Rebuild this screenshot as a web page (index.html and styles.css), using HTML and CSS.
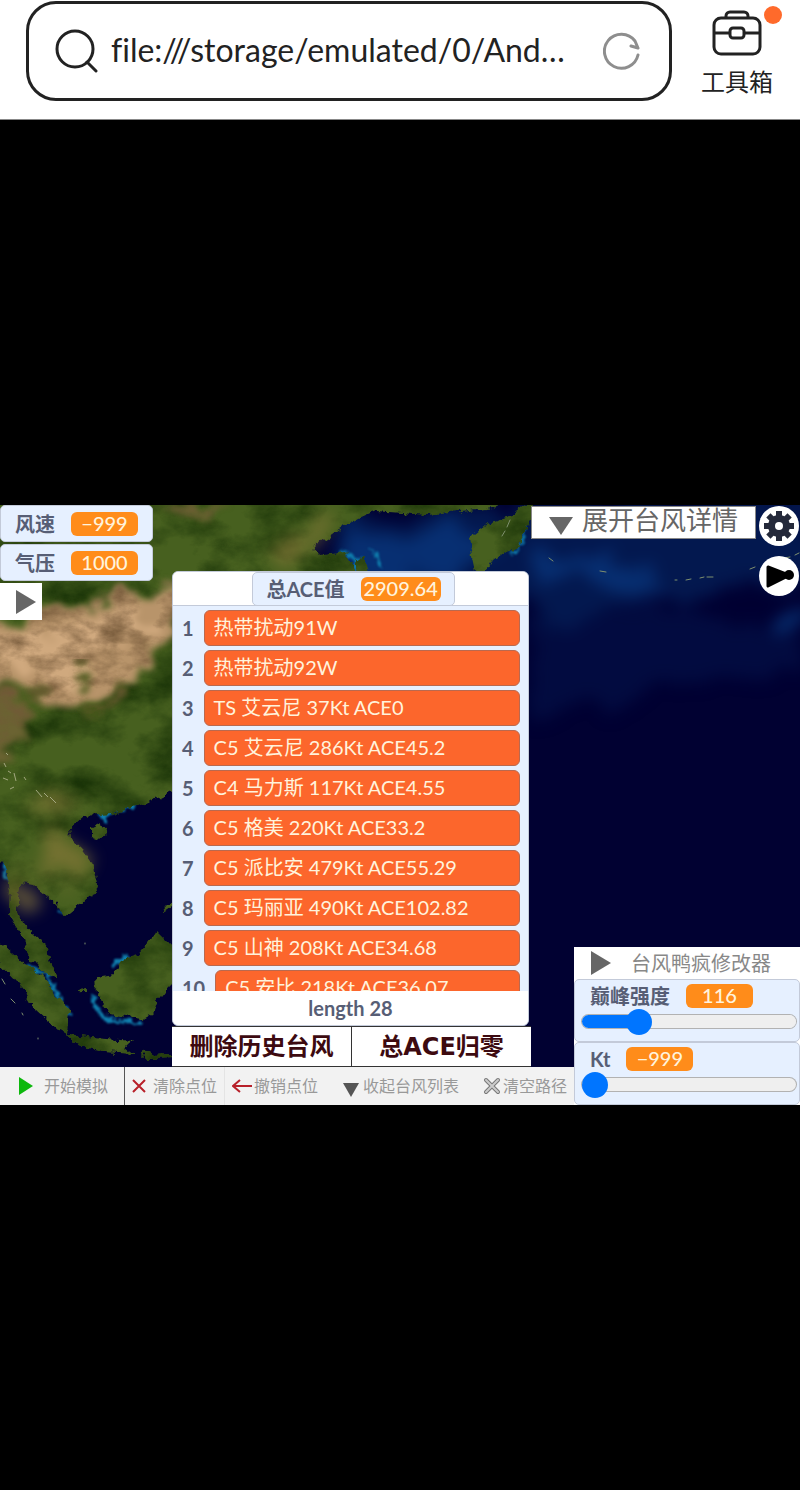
FILE: index.html
```html
<!DOCTYPE html>
<html lang="zh-CN">
<head>
  <meta charset="UTF-8">
  <meta name="viewport" content="width=device-width, initial-scale=1">
  <title>台风模拟器</title>
  <link rel="stylesheet" href="styles.css">
</head>
<body>
  <header class="browser-bar">
    <form class="address">
      <svg class="search-icon" viewBox="0 0 44 44" aria-hidden="true">
        <circle cx="20" cy="20" r="18"/>
        <path d="M32 33l9 9"/>
      </svg>
      <input class="address-input" type="text" aria-label="地址" value="file:///storage/emulated/0/And…">
      <button class="reload" type="button" aria-label="刷新">
        <svg viewBox="0 0 38 38" aria-hidden="true">
          <path d="M35 23A17 17 0 1 1 32 9l3 7-7-2"/>
        </svg>
      </button>
    </form>
    <button class="toolbox">
      <svg class="toolbox-icon" viewBox="0 0 50 46" aria-hidden="true">
        <rect x="2" y="8" width="46" height="36" rx="7"/>
        <path d="M14 8V6a4 4 0 0 1 4-4h14a4 4 0 0 1 4 4v2M2 23h16M32 23h16"/>
        <rect x="18" y="18" width="14" height="10" rx="3"/>
      </svg>
      <span>工具箱</span>
      <i class="badge"></i>
    </button>
  </header>

  <main class="stage">
    <div class="game">
      <svg class="map" viewBox="0 0 800 600" preserveAspectRatio="none" aria-hidden="true">
        <defs>
          <filter id="coast" x="-5%" y="-5%" width="110%" height="110%" color-interpolation-filters="sRGB">
            <feTurbulence type="fractalNoise" baseFrequency="0.12" numOctaves="3" seed="4" result="n"/>
            <feDisplacementMap in="SourceGraphic" in2="n" scale="9" xChannelSelector="R" yChannelSelector="G" result="land"/>
            <feTurbulence type="fractalNoise" baseFrequency="0.02 0.03" numOctaves="6" seed="9"/>
            <feColorMatrix values="0 0 0 0 0.10  0 0 0 0 0.20  0 0 0 0 0.03  2 0 0 0 -0.75"/>
            <feComposite in2="land" operator="in" result="dark"/>
            <feMerge>
              <feMergeNode in="land"/>
              <feMergeNode in="dark"/>
            </feMerge>
            <feGaussianBlur stdDeviation="0.6"/>
          </filter>
          <filter id="water" color-interpolation-filters="sRGB">
            <feTurbulence type="fractalNoise" baseFrequency="0.15" numOctaves="3" seed="5" result="n"/>
            <feDisplacementMap in="SourceGraphic" in2="n" scale="12" xChannelSelector="R" yChannelSelector="G"/>
            <feGaussianBlur stdDeviation="1"/>
          </filter>
          <filter id="haze" x="-20%" y="-20%" width="140%" height="140%" color-interpolation-filters="sRGB">
            <feTurbulence type="fractalNoise" baseFrequency="0.03" numOctaves="4" seed="2" result="n"/>
            <feDisplacementMap in="SourceGraphic" in2="n" scale="50" xChannelSelector="R" yChannelSelector="G"/>
            <feGaussianBlur stdDeviation="8"/>
          </filter>
          <filter id="sand" x="-10%" y="-10%" width="120%" height="120%" color-interpolation-filters="sRGB">
            <feTurbulence type="fractalNoise" baseFrequency="0.03 0.05" numOctaves="5" seed="7" result="n"/>
            <feDisplacementMap in="SourceGraphic" in2="n" scale="50" xChannelSelector="R" yChannelSelector="G" result="d"/>
            <feGaussianBlur in="d" stdDeviation="3" result="b"/>
            <feColorMatrix in="n" values="0 0 0 0 0.45  0 0 0 0 0.34  0 0 0 0 0.22  0 2 0 0 -0.8"/>
            <feComposite in2="b" operator="in" result="shade"/>
            <feMerge>
              <feMergeNode in="b"/>
              <feMergeNode in="shade"/>
            </feMerge>
          </filter>
          <clipPath id="mainland-clip">
            <path d="M0 0H350L172 150V270H0Z"/>
          </clipPath>
        </defs>
        <rect width="800" height="600" fill="#010132"/>
        <g filter="url(#haze)">
          <path fill="#03184f" d="M340 10L540 0 820-10V70L720 90 640 100 560 120 520 80H340Z"/>
          <path fill="#072f72" d="M350 20l60 15 40-15 60 20-60 25-90 20zM530 40l60 10 60 20 10 25-60-20-60 0zM770 115l30-10v20l-30 5z"/>
          <path fill="#020b40" d="M530 120l140-20 130 30v40l-160 20-110 20z"/>
        </g>
        <!-- shallow water along the coasts -->
        <g class="shallows" filter="url(#water)">
          <path d="M306 42l-8 6M340 45l18 10-4 12M374 45l6 18"/>
          <path d="M100 310l35-10M104 310v8M2 348l6 30M20 376l8-4M58 408l10-3"/>
          <path d="M27 462l20 8 10 20 12 22M94 490l2 14 10 10 34 4M112 462l16-10M164 445v32"/>
          <path d="M162 171h10" stroke-width="9"/>
          <path d="M522 15v20l-10 15"/>
        </g>
        <g class="land" filter="url(#coast)">
          <path d="M-9-9H466L456 6 428 10 376 6 358 14 340 24 326 34 310 44 324 50 346 47 356 66V90L200 200 176 284 154 295 132 303 112 309 84 311 70 323 71 334 82 344 92 358 97 378 92 391 78 401 64 412 58 400 46 390 32 378 22 376 17 402 23 418 34 430 46 440 50 458 57 473 44 468 28 450 24 434 14 420 9 410 10 385 6 364-9 346Z"/>
          <path d="M532-5L508 13 484 20 469 32 471 47 476 70H485L492 56 503 48 517 44 524 28 534 10Z"/>
          <path d="M356 56l8-5 4 19h-10zM500-5h-54l14 12 34-4z"/>
          <path d="M91 323l8-4 8 2-1 8-7 6-8-3z"/>
          <path d="M-9 434L4 440 26 460 44 470 54 488 70 506 68 528 56 524 36 506 22 482-9 450Z"/>
          <path d="M157 426l10 10 9 5v34l-12 12-8 10-4 12-10 6-32-6-8-14-6-8-1-16 18-3 10-14 16-4 8-10z"/>
          <path d="M68 529l24 4 40 3-6 5 10 8-34-2-31-10zM140 548l8-2 6 4 14-1 8 1v3l-30 1zM80 485l6-1v4h-5zM173 394l-12 14 2-1 12-8z"/>
        </g>
        <g clip-path="url(#mainland-clip)">
          <g filter="url(#sand)">
            <path fill="#b8946a" d="M-20 112L30 116 80 104 130 88 178 76V118L150 145 138 170 112 188 92 192 66 208 48 202 24 178-20 178Z"/>
            <path fill="#d0a97e" d="M-10 132L60 120 140 100 154 120 90 150 84 176 58 184 38 160-10 148Z"/>
            <path fill="#6b6332" d="M-20 185L18 192 26 220 10 250-20 260ZM160 5L230 4 220 12 170 18Z"/>
          </g>
          <g filter="url(#sand)" fill="#46551a">
            <path d="M70 168l14-8 8 4-12 20zM88 200l20-4 6-14 10-2-10 26-20 8zM22 182l26 12-8 8z"/>
          </g>
        </g>
        <g filter="url(#haze)" fill="#8a7a3a" opacity=".7">
          <path d="M34 340l32-6 14 26-38 10zM54 376l18 4-8 14zM20 300l40-10 30 10-50 12zM20 350l20 60-20 0zM270 50l60-40 10 8-52 36z"/>
        </g>
        <g class="snow">
          <path d="M4 258l2 4M8 266l3 2M3 273l5 2M14 268l2 8M36 285l6 7M44 288l4 4M50 292l6 6M10 284l4-2M24 272l2 3M6 248l2 2"/>
        </g>
        <g class="islets">
          <path d="M549 53l4 3M600 66l6 1M675 75l2 0M686 75l5-1M700 73l4-1M707 72l6 0M750 64l5-2M765 60l3-3M784 53l6-1M795 50l4-2M510 15l-3 7M505 26l-3 5M2 474l3 5M11 494l4 4M22 508l1 2M85 438v1M38 533v1"/>
        </g>
      </svg>

      <section class="readouts">
        <div class="monitor"><span>风速</span><output class="value">−999</output></div>
        <div class="monitor"><span>气压</span><output class="value">1000</output></div>
        <button class="toggle" aria-label="展开">
          <svg class="arrow" viewBox="0 0 20 24" aria-hidden="true"><path d="M0 0l20 12L0 24z"/></svg>
        </button>
      </section>

      <section class="history">
        <div class="list">
          <div class="list-head">
            <div class="monitor total"><span>总ACE值</span><output class="value">2909.64</output></div>
          </div>
          <ol class="rows">
            <li><span class="num">1</span><span class="item">热带扰动91W</span></li>
            <li><span class="num">2</span><span class="item">热带扰动92W</span></li>
            <li><span class="num">3</span><span class="item">TS 艾云尼 37Kt ACE0</span></li>
            <li><span class="num">4</span><span class="item">C5 艾云尼 286Kt ACE45.2</span></li>
            <li><span class="num">5</span><span class="item">C4 马力斯 117Kt ACE4.55</span></li>
            <li><span class="num">6</span><span class="item">C5 格美 220Kt ACE33.2</span></li>
            <li><span class="num">7</span><span class="item">C5 派比安 479Kt ACE55.29</span></li>
            <li><span class="num">8</span><span class="item">C5 玛丽亚 490Kt ACE102.82</span></li>
            <li><span class="num">9</span><span class="item">C5 山神 208Kt ACE34.68</span></li>
            <li><span class="num">10</span><span class="item">C5 安比 218Kt ACE36.07</span></li>
          </ol>
          <div class="list-foot">length 28</div>
        </div>
        <div class="actions">
          <button>删除历史台风</button>
          <button>总ACE归零</button>
        </div>
      </section>

      <section class="corner">
        <button class="details">
          <svg class="arrow-down" viewBox="0 0 24 18" aria-hidden="true"><path d="M0 0h24L12 18z"/></svg>
          <span>展开台风详情</span>
        </button>
        <div class="round-buttons">
          <button class="round" aria-label="设置">
            <svg viewBox="0 0 40 40" aria-hidden="true">
              <g fill="#24293a">
                <circle cx="20" cy="20" r="11"/>
                <path d="M17 5h6v30h-6z"/>
                <path d="M17 5h6v30h-6z" transform="rotate(45 20 20)"/>
                <path d="M17 5h6v30h-6z" transform="rotate(90 20 20)"/>
                <path d="M17 5h6v30h-6z" transform="rotate(135 20 20)"/>
              </g>
              <circle cx="20" cy="20" r="4" fill="#fff"/>
            </svg>
          </button>
          <button class="round" aria-label="视角">
            <svg viewBox="0 0 40 40" aria-hidden="true">
              <path d="M9 11L27 18V21L9 30Z" stroke="#000" stroke-width="3" stroke-linejoin="round"/>
              <circle cx="30" cy="19" r="5"/>
            </svg>
          </button>
        </div>
      </section>

      <section class="modifier">
        <button class="modifier-head">
          <svg class="arrow" viewBox="0 0 20 24" aria-hidden="true"><path d="M0 0l20 12L0 24z"/></svg>
          <span>台风鸭疯修改器</span>
        </button>
        <div class="slider">
          <div class="slider-head"><label for="peak">巅峰强度</label><output class="value">116</output></div>
          <input class="range peak" id="peak" type="range" min="0" max="500" value="116">
        </div>
        <div class="slider">
          <div class="slider-head"><label for="kt">Kt</label><output class="value">−999</output></div>
          <input class="range" id="kt" type="range" min="-999" max="999" value="-999">
        </div>
      </section>

      <nav class="toolbar">
        <button class="start">
          <svg class="i-play" viewBox="0 0 14 18" aria-hidden="true"><path d="M0 0l14 9L0 18z"/></svg>
          <span>开始模拟</span>
        </button>
        <button class="clear">
          <svg class="i-cross" viewBox="0 0 14 14" aria-hidden="true"><path d="M1 1l12 12M13 1L1 13"/></svg>
          <span>清除点位</span>
        </button>
        <button class="undo">
          <svg class="i-back" viewBox="0 0 20 14" aria-hidden="true"><path d="M20 7H1M8 1L1 7l7 6"/></svg>
          <span>撤销点位</span>
        </button>
        <button class="collapse">
          <svg class="i-down" viewBox="0 0 16 14" aria-hidden="true"><path d="M0 0h16L8 14z"/></svg>
          <span>收起台风列表</span>
        </button>
        <button class="wipe">
          <svg class="i-wipe" viewBox="0 0 18 18" aria-hidden="true">
            <path class="edge" d="M3 3l12 12M15 3L3 15"/>
            <path class="core" d="M3 3l12 12M15 3L3 15"/>
          </svg>
          <span>清空路径</span>
        </button>
      </nav>
    </div>
  </main>
</body>
</html>
```
FILE: styles.css
```css
* {
  box-sizing: border-box;
}
body {
  margin: 0;
  min-height: 100vh;
  display: flex;
  flex-direction: column;
  padding-bottom: 6px;
  background: #fff;
  font-family: Lato, "Noto Sans CJK SC", sans-serif;
}
button {
  margin: 0;
  padding: 0;
  border: 0;
  background: #fff;
  font-family: inherit;
  cursor: pointer;
}
svg {
  display: block;
  flex: none;
}

/* browser bar */
.browser-bar {
  display: flex;
  align-items: flex-start;
  height: 120px;
  padding: 1px 27px 0 26px;
  border-bottom: 1px solid #888;
}
.address {
  flex: 1;
  display: flex;
  align-items: center;
  height: 100px;
  padding: 0 28px 0 26px;
  border: 3px solid #222;
  border-radius: 30px;
}
.search-icon {
  width: 44px;
  height: 44px;
  fill: none;
  stroke: #222;
  stroke-width: 3;
  stroke-linecap: round;
}
.address-input {
  flex: 1;
  min-width: 0;
  padding: 0 0 3px;
  margin-left: 12px;
  border: 0;
  outline: 0;
  color: #222;
  font-family: inherit;
  font-size: 32px;
  font-variant-ligatures: none;
}
.reload svg {
  width: 38px;
  height: 38px;
  fill: none;
  stroke: #8e8e8e;
  stroke-width: 3;
  stroke-linecap: round;
  stroke-linejoin: round;
}
.toolbox {
  position: relative;
  display: flex;
  flex-direction: column;
  align-items: center;
  width: 72px;
  margin-left: 29px;
  padding-top: 9px;
  color: #222;
  font-size: 24px;
  line-height: 34px;
}
.toolbox-icon {
  width: 50px;
  height: 46px;
  margin-bottom: 9px;
  fill: none;
  stroke: #222;
  stroke-width: 3;
}
.toolbox span {
  white-space: nowrap;
}
.badge {
  position: absolute;
  top: 5px;
  right: -9px;
  width: 18px;
  height: 18px;
  border-radius: 50%;
  background: #ff6a2b;
}

/* stage */
.stage {
  flex: 1;
  display: flex;
  align-items: center;
  background: #000;
}
.game {
  position: relative;
  flex: 1;
  aspect-ratio: 4 / 3;
  display: grid;
  grid-template-columns: 172fr 359fr 43fr 226fr;
  grid-template-rows: 1fr 38px;
  overflow: hidden;
}
.map {
  position: absolute;
  width: 100%;
  height: 100%;
}
.land {
  fill: #47601f;
}
.shallows {
  fill: none;
  stroke: #0f7fae;
  stroke-width: 4;
  stroke-linejoin: round;
}
.snow {
  fill: none;
  stroke: #a3a880;
  stroke-width: 1;
}
.islets {
  fill: none;
  stroke: #7f906f;
  stroke-width: 1;
  stroke-linecap: round;
}
.readouts,
.history,
.corner,
.modifier,
.toolbar {
  position: relative;
  min-width: 0;
}

/* monitors */
.readouts {
  grid-area: 1 / 1;
  display: flex;
  flex-direction: column;
  align-items: flex-start;
  gap: 2px;
}
.monitor {
  display: flex;
  align-items: center;
  gap: 16px;
  height: 37px;
  padding: 0 14px;
  border: 1px solid #c3cad9;
  border-radius: 5px;
  background: #e6f0ff;
  color: #575e75;
  font-size: 20px;
  font-weight: 700;
  line-height: 24px;
}
.value {
  min-width: 67px;
  height: 24px;
  border-radius: 6px;
  background: #ff8c1a;
  color: #fff3dc;
  font-size: 20px;
  font-weight: 500;
  line-height: 23px;
  text-align: center;
}
.toggle {
  display: flex;
  align-items: center;
  justify-content: flex-end;
  width: 42px;
  height: 37px;
  padding-right: 6px;
}
.arrow {
  width: 20px;
  height: 24px;
  fill: #666;
}

/* history list */
.history {
  grid-area: 1 / 2;
  align-self: end;
}
.list {
  height: 455px;
  margin-right: 2px;
  display: flex;
  flex-direction: column;
  border: 1px solid #c3cad9;
  border-radius: 6px;
  background: #e6f0ff;
  overflow: hidden;
}
.list-head {
  display: flex;
  justify-content: center;
  height: 34px;
  background: #fff;
  border-bottom: 1px solid #c3cad9;
}
.total {
  height: 34px;
  margin-left: 6px;
  padding: 0 13px;
}
.total .value {
  min-width: 80px;
}
.rows {
  flex: 1;
  min-height: 0;
  margin: 0;
  padding: 4px 8px 0 9px;
  overflow: hidden;
  list-style: none;
}
.rows li {
  display: flex;
  align-items: center;
  gap: 10px;
  margin-bottom: 4px;
  font-size: 20px;
  line-height: 32px;
}
.num {
  color: #575e75;
  font-weight: 700;
}
.item {
  flex: 1;
  padding: 0 0 2px 9px;
  border: 1px solid #b9694f;
  border-radius: 6px;
  background: #fc662c;
  color: #fff3dc;
  white-space: nowrap;
}
.list-foot {
  height: 34px;
  background: #fff;
  color: #575e75;
  font-size: 20px;
  font-weight: 700;
  line-height: 34px;
  text-align: center;
}
.actions {
  display: grid;
  grid-template-columns: 1fr 1fr;
  gap: 1px;
  padding: 1px 0;
  background: #333;
}
.actions button {
  height: 39px;
  color: #3d0a10;
  font-family: "DejaVu Sans", "Noto Sans CJK SC", sans-serif;
  font-size: 24px;
  font-weight: 700;
  line-height: 36px;
}

/* top right */
.corner {
  grid-area: 1 / 3 / 2 / 5;
  display: flex;
  justify-content: space-between;
  align-items: flex-start;
  padding: 1px 1px 0 0;
}
.details {
  display: flex;
  align-items: flex-start;
  gap: 9px;
  height: 33px;
  padding: 0 17px;
  border: 1px solid #888;
  color: #666;
  font-size: 26px;
  line-height: 26px;
}
.arrow-down {
  width: 24px;
  height: 18px;
  margin-top: 10px;
  fill: #666;
}
.round-buttons {
  display: flex;
  flex-direction: column;
  gap: 10px;
}
.round {
  width: 40px;
  height: 40px;
  border-radius: 50%;
}
.round svg {
  width: 40px;
  height: 40px;
}

/* modifier panel */
.modifier {
  grid-area: 1 / 4 / 3 / 5;
  align-self: end;
  display: flex;
  flex-direction: column;
  background: #fff;
}
.modifier-head {
  display: flex;
  align-items: center;
  gap: 20px;
  height: 32px;
  padding-left: 17px;
  color: #888;
  font-size: 20px;
  line-height: 30px;
}
.slider {
  height: 63px;
  padding: 4px 3px 0 7px;
  border: 1px solid #c3cad9;
  border-radius: 5px;
  background: #e6f0ff;
}
.slider-head {
  display: flex;
  align-items: center;
  gap: 16px;
  padding-left: 8px;
  color: #575e75;
  font-size: 20px;
  font-weight: 700;
  line-height: 24px;
}
.range {
  display: block;
  width: 100%;
  height: 26px;
  margin: 0;
  background: none;
  appearance: none;
  -webkit-appearance: none;
}
.range::-webkit-slider-runnable-track {
  height: 13px;
  border-radius: 7px;
  background: #efefef;
  box-shadow: 0 0 0 1px #b2b2b2;
}
.peak::-webkit-slider-runnable-track {
  background: linear-gradient(90deg, #0075ff 26%, #efefef 26%);
}
.range::-webkit-slider-thumb {
  appearance: none;
  -webkit-appearance: none;
  width: 26px;
  height: 26px;
  margin-top: -6px;
  border-radius: 50%;
  background: #0075ff;
}

/* bottom toolbar */
.toolbar {
  grid-area: 2 / 1 / 3 / 4;
  display: grid;
  grid-template-columns: 125fr 100fr 104fr 147fr 98fr;
  background: #f2f2f2;
}
.toolbar button {
  display: flex;
  align-items: center;
  background: none;
  color: #999;
  font-size: 16px;
  line-height: 24px;
  white-space: nowrap;
}
.toolbar .start {
  gap: 11px;
  padding-left: 19px;
  border-right: 1px solid #555;
}
.toolbar .clear {
  gap: 7px;
  padding-left: 7px;
  border-right: 1px solid #e4e4e4;
}
.toolbar .undo {
  gap: 2px;
  padding-left: 7px;
}
.toolbar .collapse {
  gap: 4px;
  padding-left: 14px;
}
.toolbar .wipe {
  gap: 2px;
  padding-left: 7px;
}
.i-play {
  width: 14px;
  height: 18px;
  fill: #0db80d;
}
.i-cross {
  width: 14px;
  height: 14px;
  stroke: #b8202a;
  stroke-width: 2;
}
.i-back {
  width: 20px;
  height: 14px;
  fill: none;
  stroke: #b8202a;
  stroke-width: 2;
}
.i-down {
  width: 16px;
  height: 14px;
  margin-top: 8px;
  fill: #555;
}
.i-wipe {
  width: 18px;
  height: 18px;
  stroke-linecap: round;
}
.edge {
  stroke: #777;
  stroke-width: 4;
}
.core {
  stroke: #ccc;
  stroke-width: 2;
}
```
